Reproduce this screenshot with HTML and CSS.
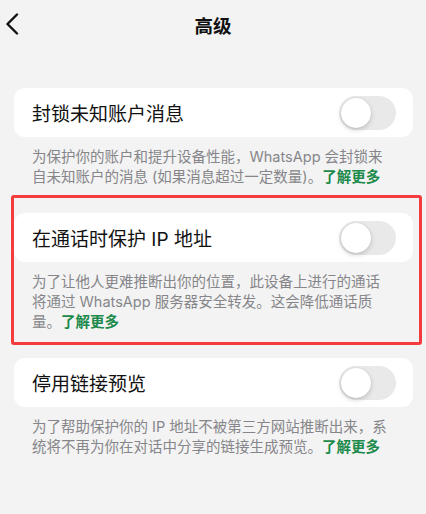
FILE: index.html
```html
<!DOCTYPE html>
<html lang="zh-CN">
<head>
    <meta charset="UTF-8">
    <meta name="viewport" content="width=device-width, initial-scale=1.0">
    <title>高级</title>
    <link rel="stylesheet" href="styles.css">
</head>
<body>

<div class="header">
    <span class="back">
        <svg width="14" height="22" viewBox="0 0 14 22">
            <path d="M12 1.5 L2.5 11 L12 20.5" fill="none" stroke="#111" stroke-width="2.4" stroke-linecap="round" stroke-linejoin="round"/>
        </svg>
    </span>
    <h1 class="title">高级</h1>
</div>

<div class="settings">
    <div class="section">
        <div class="card">
            <span class="label">封锁未知账户消息</span>
            <span class="switch"><span class="knob"></span></span>
        </div>
        <p class="desc">为保护你的账户和提升设备性能，WhatsApp 会封锁来自未知账户的消息 (如果消息超过一定数量)。<a class="more" href="#">了解更多</a></p>
    </div>

    <div class="section highlight">
        <div class="card">
            <span class="label">在通话时保护 IP 地址</span>
            <span class="switch"><span class="knob"></span></span>
        </div>
        <p class="desc">为了让他人更难推断出你的位置，此设备上进行的通话将通过 WhatsApp 服务器安全转发。这会降低通话质量。<a class="more" href="#">了解更多</a></p>
    </div>

    <div class="section">
        <div class="card">
            <span class="label">停用链接预览</span>
            <span class="switch"><span class="knob"></span></span>
        </div>
        <p class="desc">为了帮助保护你的 IP 地址不被第三方网站推断出来，系统将不再为你在对话中分享的链接生成预览。<a class="more" href="#">了解更多</a></p>
    </div>
</div>

</body>
</html>
```

FILE: styles.css
```css
body {
    margin: 0;
    background-color: #f3f3f3;
    font-family: "Inter", "Noto Sans CJK SC", sans-serif;
    color: #111;
}
.header {
    position: relative;
    height: 50px;
    display: flex;
    align-items: center;
    justify-content: center;
}
.back {
    position: absolute;
    left: 5px;
    top: 13px;
}
.title {
    margin: 0;
    font-size: 18.5px;
    font-weight: 700;
}
.settings {
    padding: 38px 13px 0 14px;
    display: flex;
    flex-direction: column;
    gap: 26px;
}
.section {
    position: relative;
}
/* red frame drawn around the IP section */
.highlight::after {
    content: "";
    position: absolute;
    top: -18px;
    left: -3px;
    right: -9px;
    bottom: -13px;
    border: 3px solid #f53b3d;
    border-radius: 3px;
}
.card {
    background-color: #fff;
    border-radius: 11px;
    height: 49px;
    padding: 0 17px 0 18px;
    display: flex;
    align-items: center;
    justify-content: space-between;
}
.label {
    font-size: 19px;
}
.switch {
    width: 57px;
    height: 34px;
    border-radius: 17px;
    background-color: #e9e9ea;
    position: relative;
}
.knob {
    position: absolute;
    left: 2px;
    top: 2px;
    width: 30px;
    height: 30px;
    border-radius: 50%;
    background-color: #fff;
    box-shadow: 0 2px 5px rgba(0, 0, 0, 0.18), 0 0 1px rgba(0, 0, 0, 0.15);
}
.desc {
    margin: 10px 0 0 0;
    padding: 0 24px 0 18px;
    font-size: 14.5px;
    line-height: 20px;
    color: #86868a;
}
.more {
    color: #1b8a4a;
    font-weight: 600;
    text-decoration: none;
}
```
